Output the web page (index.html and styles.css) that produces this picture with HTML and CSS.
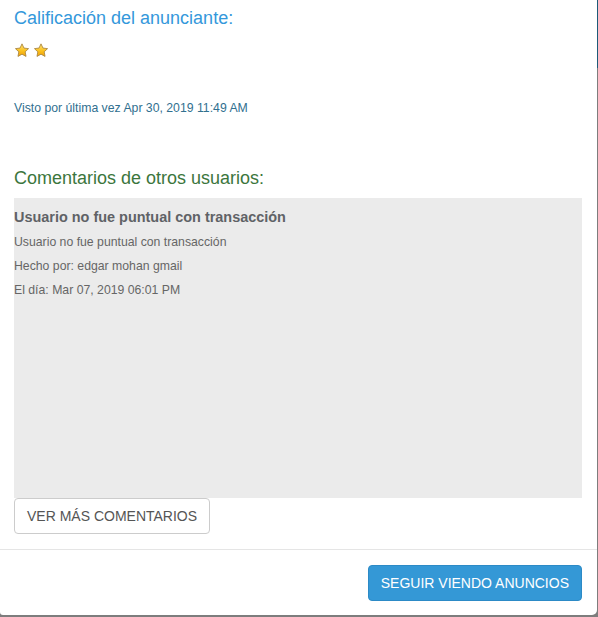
FILE: index.html
```html
<!DOCTYPE html>
<html lang="es">
<head>
<meta charset="utf-8">
<title>Calificación</title>
<link rel="stylesheet" href="styles.css">
</head>
<body>
<div class="modal">
  <div class="modal-body">
    <h3 class="title-rating">Calificación del anunciante:</h3>
    <div class="stars">
      <svg class="star" viewBox="0 0 16 16" width="16" height="15"><defs><linearGradient id="g1" x1="0" y1="0" x2="0" y2="1"><stop offset="0" stop-color="#ffe27a"/><stop offset="0.55" stop-color="#fbc21e"/><stop offset="1" stop-color="#f0a10c"/></linearGradient></defs><path d="M8 0.9l2.1 4.5 4.9 0.6-3.6 3.4 0.9 4.9L8 11.9l-4.3 2.4 0.9-4.9L1 6l4.9-0.6z" fill="url(#g1)" stroke="#a8843c" stroke-width="0.9" stroke-linejoin="round"/></svg>
      <svg class="star" viewBox="0 0 16 16" width="16" height="15"><path d="M8 0.9l2.1 4.5 4.9 0.6-3.6 3.4 0.9 4.9L8 11.9l-4.3 2.4 0.9-4.9L1 6l4.9-0.6z" fill="url(#g1)" stroke="#a8843c" stroke-width="0.9" stroke-linejoin="round"/></svg>
    </div>
    <p class="seen">Visto por última vez Apr 30, 2019 11:49 AM</p>
    <h3 class="title-comments">Comentarios de otros usuarios:</h3>
    <div class="comments">
      <h4 class="comment-title">Usuario no fue puntual con transacción</h4>
      <p class="comment-line">Usuario no fue puntual con transacción</p>
      <p class="comment-line">Hecho por: edgar mohan gmail</p>
      <p class="comment-line">El día: Mar 07, 2019 06:01 PM</p>
    </div>
    <button class="btn btn-default">VER MÁS COMENTARIOS</button>
  </div>
  <div class="modal-footer">
    <button class="btn btn-primary">SEGUIR VIENDO ANUNCIOS</button>
  </div>
</div>
</body>
</html>
```

FILE: styles.css
```css
html, body {
  margin: 0;
  padding: 0;
}
body {
  width: 598px;
  height: 617px;
  overflow: hidden;
  font-family: "Liberation Sans", Arial, sans-serif;
  background: linear-gradient(to bottom, #1d5a78 0, #1d5a78 68px, #7d7d7d 68px, #7d7d7d 100%);
}
.modal {
  width: 597px;
  height: 615px;
  background: #fff;
  border-radius: 0 0 5px 3px;
  box-sizing: border-box;
  display: flex;
  flex-direction: column;
}
.modal-body {
  padding: 8px 15px 15px 14px;
  border-bottom: 1px solid #e5e5e5;
  display: flex;
  flex-direction: column;
  align-items: flex-start;
}
.title-rating, .title-comments {
  margin: 0;
  font-size: 18px;
  line-height: 20px;
  font-weight: normal;
}
.title-rating {
  color: #3498db;
}
.title-comments {
  color: #3c763d;
  margin-top: 52px;
}
.stars {
  display: flex;
  gap: 3px;
  margin-top: 15px;
  height: 15px;
}
.star {
  display: block;
}
.seen {
  margin: 42px 0 0;
  font-size: 12.25px;
  line-height: 16px;
  color: #31708f;
}
.comments {
  margin-top: 10px;
  align-self: stretch;
  height: 300px;
  box-sizing: border-box;
  background: #ebebeb;
  padding-top: 9px;
}
.comment-title {
  margin: 0 0 3px;
  font-size: 14.45px;
  line-height: 20px;
  font-weight: bold;
  color: #5f6266;
}
.comment-line {
  margin: 0;
  font-size: 12.25px;
  line-height: 24px;
  color: #666;
}
.btn {
  font-family: "Liberation Sans", Arial, sans-serif;
  font-size: 14px;
  line-height: 20px;
  padding: 7px 12px;
  border-radius: 4px;
  border: 1px solid transparent;
  cursor: pointer;
}
.btn-default {
  background: #fff;
  border-color: #ccc;
  color: #555;
}
.modal-footer {
  padding: 15px 15px 15px;
  display: flex;
  justify-content: flex-end;
}
.btn-primary {
  background: #3498d6;
  border-color: #2c8ac6;
  color: #fff;
}
```
